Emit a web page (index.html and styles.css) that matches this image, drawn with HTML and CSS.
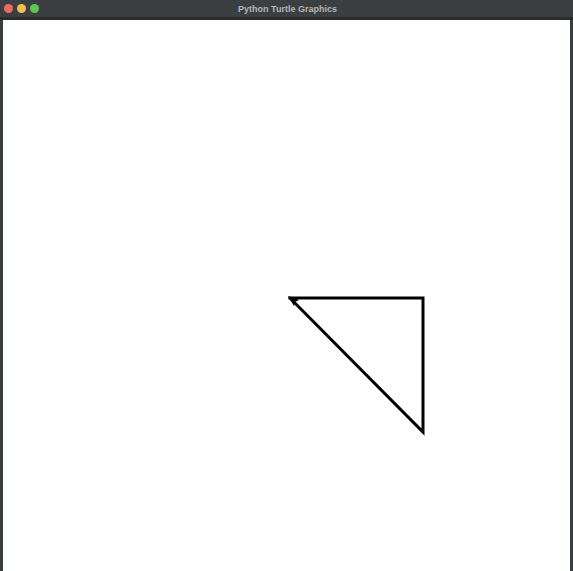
FILE: index.html
```html
<!DOCTYPE html>
<html>
<head>
<meta charset="utf-8">
<link rel="stylesheet" href="styles.css">
</head>
<body>
<div class="window">
  <div class="titlebar">
    <div class="lights">
      <span class="light red"></span>
      <span class="light yellow"></span>
      <span class="light green"></span>
    </div>
    <div class="title">Python Turtle Graphics</div>
  </div>
  <div class="frame">
    <svg class="canvas" width="567" height="551" viewBox="3 20 567 551">
      <polyline points="290,298 423,298 423,432 290,298" fill="none" stroke="#000" stroke-width="3" stroke-linejoin="miter" stroke-linecap="square"/>
      <polygon points="288,296 299,300 295,302 294,306" fill="#000"/>
    </svg>
  </div>
</div>
</body>
</html>
```
FILE: styles.css
```css
html, body {
  margin: 0;
  padding: 0;
  background: #ffffff;
}
.window {
  width: 573px;
  height: 571px;
  display: flex;
  flex-direction: column;
  background: #3a3d40;
}
.titlebar {
  height: 17px;
  position: relative;
  display: flex;
  align-items: center;
  justify-content: center;
  background: #3c3f42;
  border-bottom: 3px solid #2a2c2e;
}
.lights {
  position: absolute;
  left: 4px;
  top: 4px;
  display: flex;
  gap: 4px;
}
.light {
  width: 9px;
  height: 9px;
  border-radius: 50%;
}
.red { background: #ed6a5e; }
.yellow { background: #f5bf4f; }
.green { background: #61c554; }
.title {
  font-family: "Liberation Sans", Arial, sans-serif;
  font-weight: bold;
  font-size: 9px;
  color: #b4b6b8;
  letter-spacing: 0;
  padding-left: 2px;
}
.frame {
  flex: 1;
  display: flex;
  padding: 0 3px 0 3px;
  background: #3a3d40;
}
.canvas {
  display: block;
  background: #ffffff;
}
```
